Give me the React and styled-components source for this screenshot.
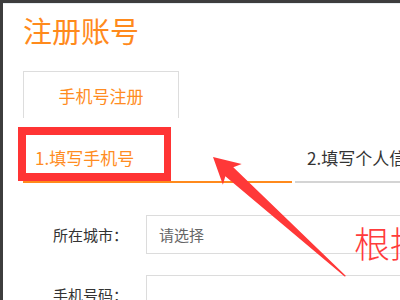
import React from 'react'
import styled, { createGlobalStyle } from 'styled-components'

const GlobalStyle = createGlobalStyle`
  html, body {
    margin: 0;
    padding: 0;
    background: #ffffff;
  }
  body {
    font-family: "Noto Sans CJK SC", "Microsoft YaHei", sans-serif;
  }
`

const Frame = styled.div`
  position: relative;
  width: 400px;
  height: 300px;
  overflow: hidden;
  box-sizing: border-box;
  background: #3d3d3d;
  padding: 3px 0 0 3px;
`

const Page = styled.div`
  height: 100%;
  background: #ffffff;
  border-top: 1px solid #e8eef2;
  box-sizing: border-box;
  overflow: hidden;
`

const Title = styled.h1`
  margin: 8px 0 0 20px;
  font-size: 29px;
  line-height: 36px;
  font-weight: 400;
  color: #ff8a1c;
  white-space: nowrap;
`

const Tab = styled.div`
  display: flex;
  align-items: center;
  justify-content: center;
  width: 156px;
  height: 47px;
  margin: 23px 0 0 20px;
  box-sizing: border-box;
  border: 1px solid #dddddd;
  border-bottom: none;
  font-size: 17px;
  color: #ff8c22;
`

const Steps = styled.div`
  display: flex;
  gap: 3px;
  margin-left: 20px;
`

const Step = styled.div`
  flex: ${p => (p.$active ? '0 0 269px' : '0 0 200px')};
  height: 65px;
  box-sizing: border-box;
  display: flex;
  align-items: flex-end;
  padding: 0 0 13px 12px;
  border-bottom: 2px solid ${p => (p.$active ? '#ff8a1c' : '#d4d4d4')};
  font-size: 17px;
  line-height: 20px;
  color: ${p => (p.$active ? '#ff8c22' : '#333333')};
  white-space: nowrap;
`

const Form = styled.div`
  display: grid;
  grid-template-columns: 80px 300px;
  column-gap: 13px;
  row-gap: 21px;
  margin-top: 32px;
  padding-left: 50px;
  align-items: center;
`

const Label = styled.label`
  font-size: 15px;
  color: #333333;
  white-space: nowrap;
`

const Field = styled.div`
  height: 39px;
  box-sizing: border-box;
  border: 1px solid #dcdcdc;
  display: flex;
  align-items: center;
  padding-left: 12px;
  font-size: 15px;
  color: #666666;
`

const Highlight = styled.div`
  position: absolute;
  left: 18px;
  top: 127px;
  width: 153px;
  height: 54px;
  box-sizing: border-box;
  border: 8px solid #ff3434;
  border-right-width: 7px;
  pointer-events: none;
`

const Arrow = styled.svg`
  position: absolute;
  left: 0;
  top: 0;
  pointer-events: none;
`

const Note = styled.div`
  position: absolute;
  left: 354px;
  top: 224px;
  font-size: 36px;
  line-height: 1;
  font-weight: 300;
  color: #ff3c3c;
  white-space: nowrap;
`

export default function App() {
  return (
    <>
      <GlobalStyle />
      <Frame>
        <Page>
          <Title>注册账号</Title>
          <Tab>手机号注册</Tab>
          <Steps>
            <Step $active>1.填写手机号</Step>
            <Step>2.填写个人信息</Step>
          </Steps>
          <Form>
            <Label>所在城市：</Label>
            <Field>请选择</Field>
            <Label>手机号码：</Label>
            <Field />
          </Form>
        </Page>
        <Highlight />
        <Arrow width="400" height="300" viewBox="0 0 400 300">
          <polygon
            fill="#ff3838"
            points="213,157 241.7,164 233.3,167.2 346,276 344.6,276.6 225.3,176.2 222.9,184.8"
          />
        </Arrow>
        <Note>根据</Note>
      </Frame>
    </>
  )
}
